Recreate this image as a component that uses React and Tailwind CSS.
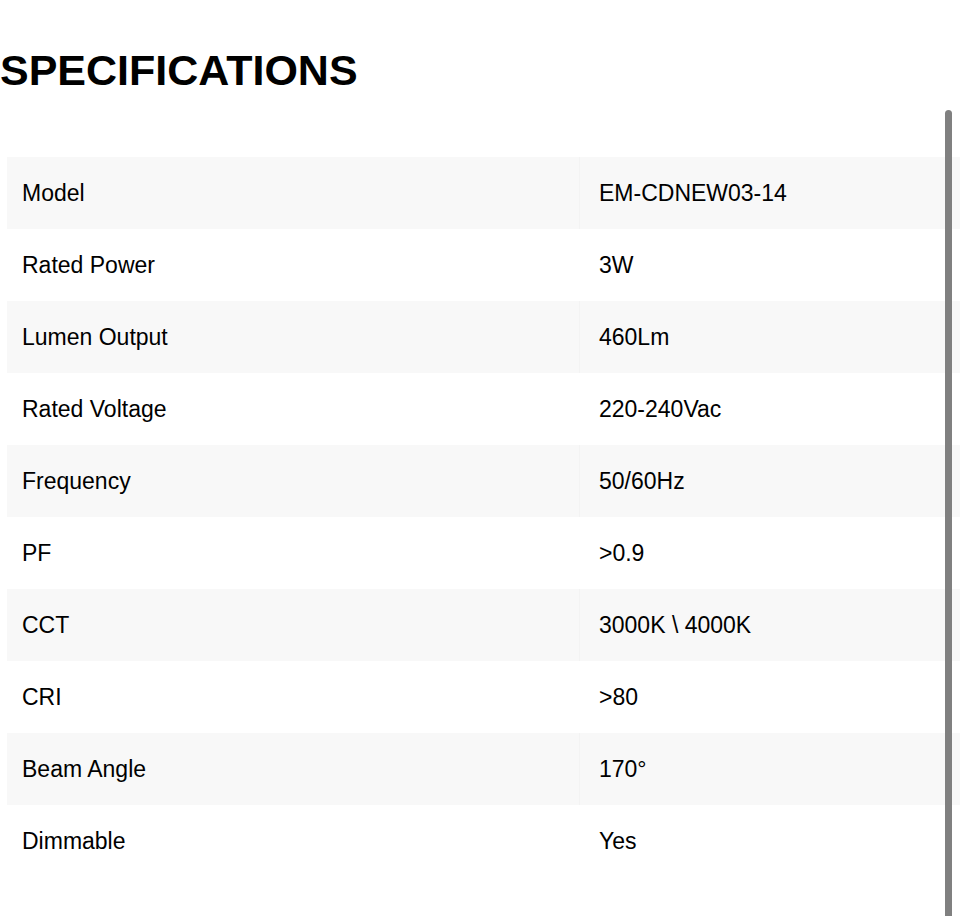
const specs = [
  ['Model', 'EM-CDNEW03-14'],
  ['Rated Power', '3W'],
  ['Lumen Output', '460Lm'],
  ['Rated Voltage', '220-240Vac'],
  ['Frequency', '50/60Hz'],
  ['PF', '>0.9'],
  ['CCT', '3000K \\ 4000K'],
  ['CRI', '>80'],
  ['Beam Angle', '170°'],
  ['Dimmable', 'Yes'],
];

export default function App() {
  return (
    <div
      className="relative h-[916px] w-[960px] overflow-hidden bg-white text-black"
      style={{ fontFamily: '"Liberation Sans", Arial, sans-serif' }}
    >
      <h1 className="pt-[45px] text-[43px] font-bold leading-[50px]">SPECIFICATIONS</h1>

      {/* spec table */}
      <div className="ml-[7px] mt-[62px] w-[970px]">
        {specs.map(([label, value], i) => (
          <div
            key={label}
            className={`flex h-[72px] items-center text-[23px] ${i % 2 === 0 ? 'bg-[#f8f8f8]' : 'bg-white'}`}
          >
            <div
              className={`flex h-full w-[573px] items-center pl-[15px] ${i % 2 === 0 ? 'border-r border-[#f3f3f3]' : ''}`}
            >
              {label}
            </div>
            <div className="flex h-full flex-1 items-center pl-[19px]">{value}</div>
          </div>
        ))}
      </div>

      {/* scroll thumb */}
      <div className="absolute left-[945px] top-[110px] h-[820px] w-[7px] rounded-full bg-[#808080]" />
    </div>
  );
}
